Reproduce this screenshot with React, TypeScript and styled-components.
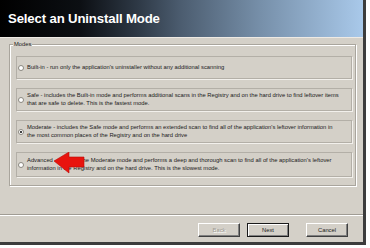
import React from 'react';
import styled, { createGlobalStyle } from 'styled-components';

const GlobalStyle = createGlobalStyle`
  html, body {
    margin: 0;
    padding: 0;
    background: #ffffff;
  }
  body {
    width: 370px;
    height: 248px;
    overflow: hidden;
    font-family: "Liberation Sans", Arial, sans-serif;
  }
`;

const Window = styled.div`
  width: 366px;
  height: 245px;
  box-sizing: border-box;
  background: #d4d0c8;
  border-right: 3px solid #3c3c3c;
  border-bottom: 3px solid #3c3c3c;
  display: flex;
  flex-direction: column;
`;

const Header = styled.div`
  height: 38px;
  flex: none;
  box-sizing: border-box;
  display: flex;
  align-items: center;
  padding-left: 8px;
  background: linear-gradient(
    to right,
    #000000 0%,
    #0c0f13 22%,
    #2e3946 38%,
    #4c5d70 50%,
    #7790aa 72%,
    #a9c9ea 100%
  );
  border-bottom: 1px solid #eeeae4;
`;

const Title = styled.h1`
  margin: 0;
  color: #ffffff;
  font-size: 13.2px;
  font-weight: bold;
  letter-spacing: -0.15px;
`;

const Content = styled.div`
  height: 175px;
  box-sizing: border-box;
  padding: 6px 9px 0 9px;
`;

const GroupBox = styled.div`
  position: relative;
  width: 347px;
  box-sizing: border-box;
  border: 1px solid #a9a59d;
  box-shadow: inset 1px 1px 0 #ffffff, 1px 1px 0 #ffffff;
  padding: 11px 3px 8px 6px;
  display: flex;
  flex-direction: column;
  gap: 9px;
`;

const Legend = styled.span`
  position: absolute;
  top: -4px;
  left: 3px;
  padding: 0 1px;
  background: #d4d0c8;
  font-size: 5.8px;
  color: #202020;
`;

const Option = styled.div<{ $tall?: boolean }>`
  position: relative;
  height: ${(p) => (p.$tall ? 25 : 23)}px;
  box-sizing: border-box;
  border: 1px solid #b3afa7;
  box-shadow: 1px 1px 0 #f2f0ec;
  display: flex;
  align-items: center;
  gap: 3px;
  padding-left: 1px;
`;

const Radio = styled.span<{ $checked?: boolean }>`
  flex: none;
  width: 6px;
  height: 6px;
  box-sizing: border-box;
  border-radius: 50%;
  background: #ffffff;
  border: 1px solid #8a877f;
  display: flex;
  align-items: center;
  justify-content: center;
  &::after {
    content: '';
    width: 2px;
    height: 2px;
    border-radius: 50%;
    background: ${(p) => (p.$checked ? '#000000' : 'transparent')};
  }
`;

const OptionText = styled.div`
  font-size: 5.82px;
  line-height: 7.3px;
  color: #1a1a1a;
`;

const Arrow = styled.svg`
  position: absolute;
  left: 36px;
  top: -1px;
`;

const Separator = styled.div`
  height: 2px;
  flex: none;
  border-top: 1px solid #a09c94;
  border-bottom: 1px solid #ffffff;
  box-sizing: border-box;
  margin-top: 1px;
`;

const ButtonBar = styled.div`
  flex: 1;
  display: flex;
  align-items: flex-start;
  justify-content: flex-end;
  padding: 7px 15px 0 0;
`;

const Button = styled.button<{ $default?: boolean; $gap?: number }>`
  width: 42px;
  height: 14px;
  margin-left: ${(p) => p.$gap ?? 0}px;
  padding: 0;
  box-sizing: border-box;
  font-family: "Liberation Sans", Arial, sans-serif;
  font-size: 5.8px;
  color: #1a1a1a;
  background: #d4d0c8;
  border: 1px solid;
  border-color: ${(p) =>
    p.$default ? '#1a1a1a' : '#ffffff #404040 #404040 #ffffff'};
  box-shadow: ${(p) =>
    p.$default
      ? 'inset 1px 1px 0 #ffffff, inset -1px -1px 0 #808080'
      : 'inset -1px -1px 0 #808080'};
  &:disabled {
    color: #a09c94;
    text-shadow: 1px 1px 0 #ffffff;
  }
`;

const modes = [
  {
    text: ["Built-in - run only the application's uninstaller without any additional scanning"],
  },
  {
    text: [
      'Safe - includes the Built-in mode and performs additional scans in the Registry and on the hard drive to find leftover items',
      'that are safe to delete. This is the fastest mode.',
    ],
  },
  {
    checked: true,
    text: [
      "Moderate - includes the Safe mode and performs an extended scan to find all of the application's leftover information in",
      'the most common places of the Registry and on the hard drive',
    ],
  },
  {
    tall: true,
    arrow: true,
    text: [
      "Advanced - includes the Moderate mode and performs a deep and thorough scan to find all of the application's leftover",
      'information in the Registry and on the hard drive. This is the slowest mode.',
    ],
  },
];

function App() {
  return (
    <>
      <GlobalStyle />
      <Window>
        <Header>
          <Title>Select an Uninstall Mode</Title>
        </Header>
        <Content>
          <GroupBox>
            <Legend>Modes</Legend>
            {modes.map((m, i) => (
              <Option key={i} $tall={m.tall}>
                <Radio $checked={m.checked} />
                <OptionText>
                  {m.text.map((line, j) => (
                    <div key={j}>{line}</div>
                  ))}
                </OptionText>
                {m.arrow && (
                  <Arrow width="32" height="23" viewBox="0 0 32 23">
                    <polygon
                      points="1,9 16,0 16,5 31,5 31,15 16,15 16,21"
                      fill="#e8140e"
                      stroke="#b80c08"
                      strokeWidth="0.6"
                      strokeLinejoin="round"
                    />
                  </Arrow>
                )}
              </Option>
            ))}
          </GroupBox>
        </Content>
        <Separator />
        <ButtonBar>
          <Button disabled>Back</Button>
          <Button $default $gap={7}>Next</Button>
          <Button $gap={17}>Cancel</Button>
        </ButtonBar>
      </Window>
    </>
  );
}

export default App;
